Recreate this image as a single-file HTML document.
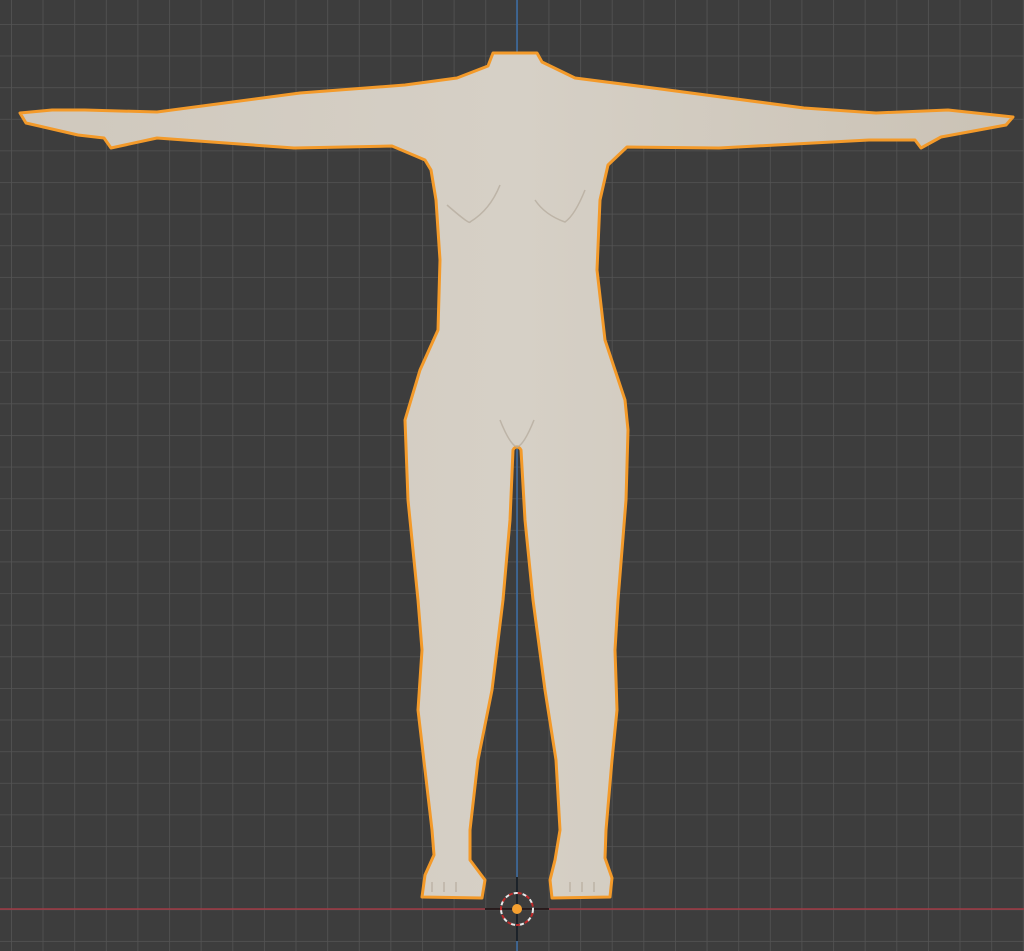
<!DOCTYPE html>
<html><head><style>html,body{margin:0;padding:0;background:#3d3d3d;overflow:hidden}svg{display:block}</style></head>
<body>
<svg width="1024" height="951" viewBox="0 0 1024 951" xmlns="http://www.w3.org/2000/svg">
<defs>
<pattern id="g" x="11" y="24" width="31.62" height="31.62" patternUnits="userSpaceOnUse">
<path d="M0 0H31.62M0 0V31.62" stroke="#545454" stroke-width="1.6" fill="none"/>
</pattern>
<linearGradient id="sk" x1="0" y1="0" x2="1" y2="0">
<stop offset="0" stop-color="#cfc8bd"/><stop offset="0.5" stop-color="#d6d0c6"/><stop offset="1" stop-color="#cac2b5"/>
</linearGradient>
</defs>
<rect width="1024" height="951" fill="#3d3d3d"/>
<rect width="1024" height="951" fill="url(#g)"/>
<line x1="517" y1="0" x2="517" y2="951" stroke="#3c6fa8" stroke-width="1.5"/>
<line x1="0" y1="909" x2="1024" y2="909" stroke="#a13a45" stroke-width="1.5"/>
<path fill="url(#sk)" stroke="#f39a2a" stroke-width="3" stroke-linejoin="round" d="
M493 53 L537 53 L542 62 L575 78 L653 88 L804 108 L876 113 L948 110 L1013 117 L1006 125 L941 137 L921 148 L915 140 L869 140 L719 148 L627 147 L608 165
L600 200 L597 270 L605 340 L625 400 L628 430 L626 500 L618 600 L615 650 L617 710 L612 760 L606 830 L605 858 L612 878 L610 897 L552 898 L550 880 L555 860 L560 830 L556 760 L545 690 L533 600 L525 520 L521 450
C519 446 515 446 513 450
L510 520 L503 600 L492 690 L478 760 L470 830 L470 860 L485 880 L482 898 L422 897 L425 875 L434 855 L432 830 L425 770 L418 710 L422 650 L418 600 L408 500 L405 420 L420 370 L438 330 L440 260 L436 200 L431 170 L425 160 L392 146 L294 148 L157 138 L111 148 L104 138 L78 135 L26 123 L20 113 L52 110 L85 110 L157 112 L300 93 L405 85 L457 78 L488 66 Z"/>
<g stroke="#b6ad9f" stroke-width="1.5" fill="none" opacity="0.8">
<path d="M447 205 Q470 225 470 222 Q490 210 500 185"/>
<path d="M585 190 Q575 215 565 222 Q545 215 535 200"/>
<path d="M500 420 Q510 445 517 447 Q524 445 534 420"/>
<path d="M432 882v10M444 882v10M456 882v10M570 882v10M582 882v10M594 882v10"/>
</g>
<line x1="485" y1="909" x2="549" y2="909" stroke="#111" stroke-width="1.5"/>
<line x1="517" y1="877" x2="517" y2="941" stroke="#111" stroke-width="1.5"/>
<circle cx="517" cy="909" r="16" fill="none" stroke="#e8e8e8" stroke-width="2" stroke-dasharray="5 4"/>
<circle cx="517" cy="909" r="16" fill="none" stroke="#c02a2a" stroke-width="2" stroke-dasharray="4 5" stroke-dashoffset="5"/>
<circle cx="517" cy="909" r="5" fill="#f5a030"/>
</svg>
</body></html>
